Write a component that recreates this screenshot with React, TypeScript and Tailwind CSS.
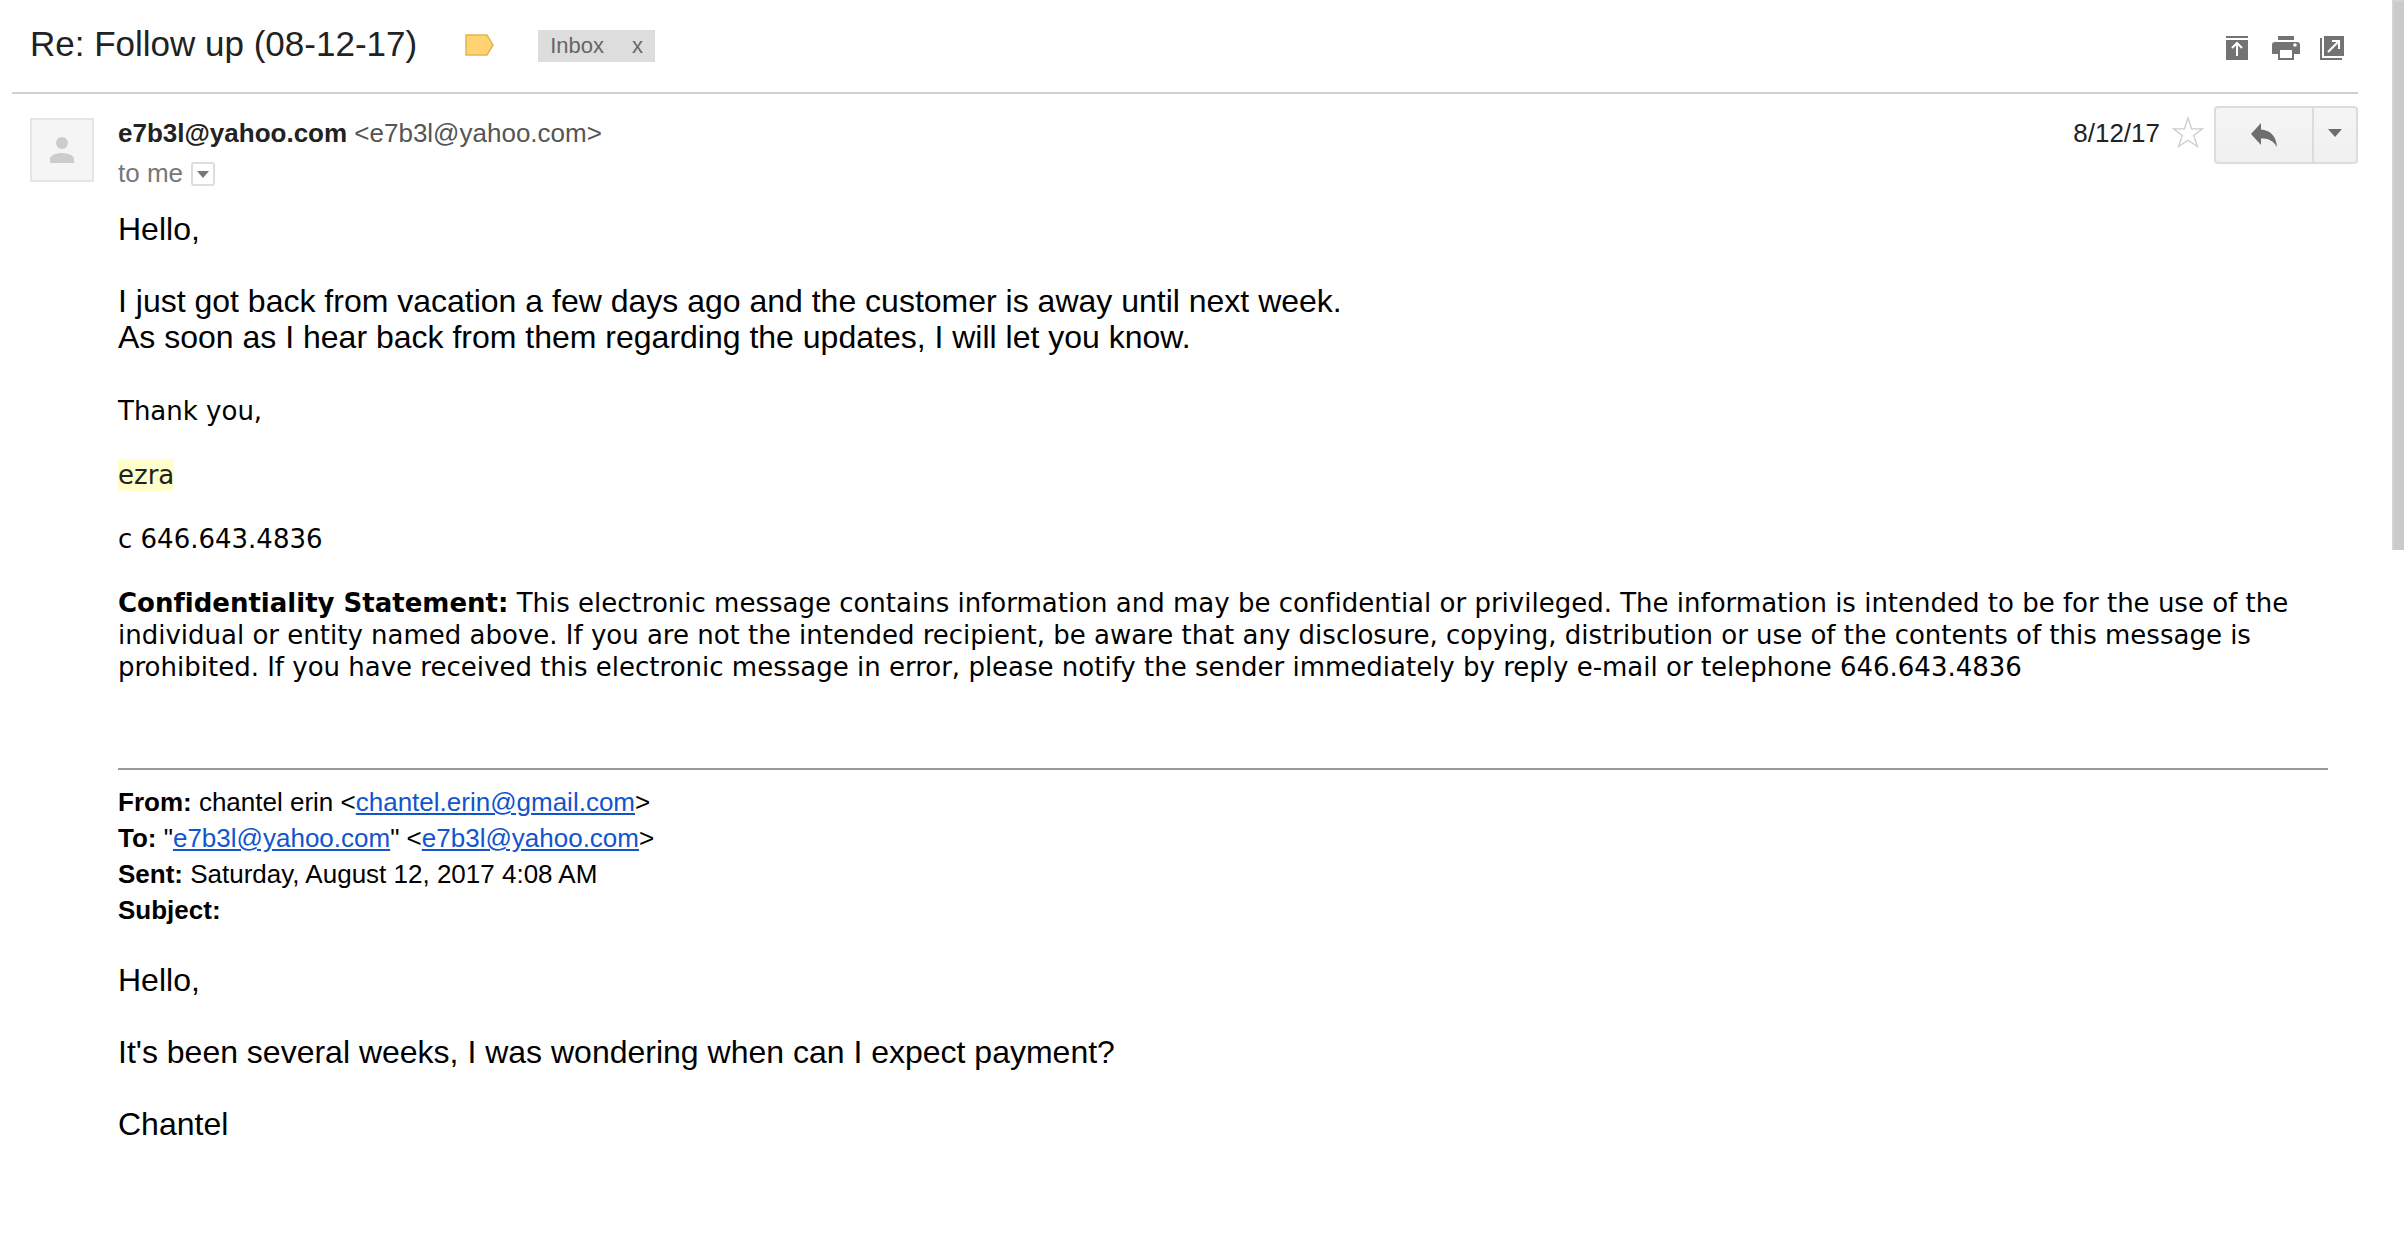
import React from "react";

function ArchiveIcon() {
  return (
    <svg width="22" height="24" viewBox="0 0 22 24" aria-hidden="true">
      <path fill="#737373" d="M0 0h22v2H0zM0 4h22v20H0z" />
      <path d="M11 20V8M6 12l5-5 5 5" stroke="#fff" strokeWidth="2" fill="none" />
    </svg>
  );
}

function PrintIcon() {
  return (
    <svg width="28" height="24" viewBox="0 0 28 24" aria-hidden="true">
      <path fill="#737373" d="M6 0h16v4H6zM3 6h22a3 3 0 0 1 3 3v9h-6v6H6v-6H0V9a3 3 0 0 1 3-3z" />
      <path fill="#fff" d="M8 14h12v8H8z" />
      <circle cx="23" cy="9" r="1.8" fill="#fff" />
    </svg>
  );
}

function PopOutIcon() {
  return (
    <svg width="24" height="24" viewBox="0 0 24 24" aria-hidden="true">
      <path fill="#737373" d="M4 0h20v20H4zM0 2h2v20h20v2H0z" />
      <path d="M8 16L19 5M12 5h7v8" stroke="#fff" strokeWidth="2" fill="none" />
    </svg>
  );
}

function Caret({ width, height, color }: { width: number; height: number; color: string }) {
  return (
    <svg width={width} height={height} viewBox="0 0 14 8" preserveAspectRatio="none" aria-hidden="true">
      <path d="M0 0h14L7 8z" fill={color} />
    </svg>
  );
}

function MailLink({ address }: { address: string }) {
  return (
    <a href={`mailto:${address}`} className="text-[#1155cc] underline">
      {address}
    </a>
  );
}

function SubjectBar() {
  return (
    <header className="ml-3 flex h-[94px] items-start border-b-2 border-[#cfcfcf] pl-[18px] pr-3.5">
      <h1 className="mt-6 text-[35px] leading-10 text-[#222]">Re: Follow up (08-12-17)</h1>
      <button type="button" aria-label="Importance marker" className="ml-12 mt-[34px]">
        <svg width="29" height="22" viewBox="0 0 29 22" aria-hidden="true">
          <path d="M1 1h21l6 10-6 10H1z" fill="#ffd272" stroke="#e3b552" strokeWidth="1.5" />
        </svg>
      </button>
      <div className="ml-11 mt-[30px] flex h-8 items-center bg-[#ddd] text-[22px] leading-8 text-[#666]">
        <span className="pl-3">Inbox</span>
        <button type="button" aria-label="Remove label Inbox" className="ml-4 px-3">
          x
        </button>
      </div>
      <div className="ml-auto mt-9 flex items-center">
        <button type="button" aria-label="Archive" className="mr-6"><ArchiveIcon /></button>
        <button type="button" aria-label="Print all" className="mr-5"><PrintIcon /></button>
        <button type="button" aria-label="In new window"><PopOutIcon /></button>
      </div>
    </header>
  );
}

function MessageHeader() {
  return (
    <div className="flex items-start pl-[30px] pt-3 text-[26px]">
      <div className="mt-3 flex size-16 shrink-0 items-center justify-center border-2 border-[#e5e5e5] bg-[#f5f5f5]">
        <svg width="24" height="26" viewBox="0 0 24 26" aria-hidden="true">
          <circle cx="12" cy="6" r="6" fill="#ccc" />
          <path d="M0 26v-4c0-4 7-6 12-6s12 2 12 6v4z" fill="#ccc" />
        </svg>
      </div>
      <div className="ml-6 mt-[7px]">
        <p className="leading-10 text-[#555]">
          <strong className="text-[#222]">e7b3l@yahoo.com</strong> &lt;e7b3l@yahoo.com&gt;
        </p>
        <p className="flex items-center leading-10 text-[#777]">
          to me
          <button
            type="button"
            aria-label="Show details"
            className="ml-2 mt-0.5 flex size-6 items-center justify-center rounded-[3px] border-2 border-[#ddd] bg-white"
          >
            <Caret width={12} height={7} color="#777" />
          </button>
        </p>
      </div>
      <div className="ml-auto flex">
        <time dateTime="2017-08-12" className="mt-[7px] leading-10 text-[#222]">8/12/17</time>
        <button type="button" aria-label="Not starred" className="ml-3 mr-2.5 mt-2.5 self-start">
          <svg width="32" height="32" viewBox="0 0 32 32" aria-hidden="true">
            <path
              d="M16 2l3.600 10.800H30.500l-8.900 6.700 3.900 11L16 24.200 6.500 30.500l3.900-11-8.900-6.700h10.900z"
              fill="#fff"
              stroke="#ccc"
              strokeWidth="1.300"
            />
          </svg>
        </button>
        <div className="flex h-[58px] divide-x-2 divide-[#dcdcdc] rounded-[4px] border-2 border-[#dcdcdc] bg-linear-to-b from-[#f5f5f5] to-[#f0f0f0]">
          <button type="button" aria-label="Reply" className="flex w-[98px] items-center justify-center">
            <svg width="26" height="24" viewBox="0 0 26 24" aria-hidden="true">
              <path d="M0 11L10 0v6.500C19 7.500 25 12 26 24 22 17 17 15.500 10 15.500V22z" fill="#6e6e6e" />
            </svg>
          </button>
          <button type="button" aria-label="More" className="flex w-[42px] items-center justify-center pb-1">
            <Caret width={14} height={8} color="#6e6e6e" />
          </button>
        </div>
      </div>
    </div>
  );
}

function MessageBody() {
  return (
    <article className="pb-10 pl-[118px] pr-[30px] pt-[18px] text-[32px] leading-9 text-black">
      <p>Hello,</p>
      <p className="mt-9">
        I just got back from vacation a few days ago and the customer is away until next week.
        <br />
        As soon as I hear back from them regarding the updates, I will let you know.
      </p>
      <div className="mt-10 space-y-8 font-['DejaVu_Sans',sans-serif] text-[26px] leading-8 [font-variant-ligatures:none]">
        <p>Thank you,</p>
        <p>
          <mark className="inline-block bg-[#ffffcc] text-[#222]">ezra</mark>
        </p>
        <p>c 646.643.4836</p>
        <p>
          <strong>Confidentiality Statement:</strong> This electronic message contains information and may be
          confidential or privileged. The information is intended to be for the use of the individual or entity
          named above. If you are not the intended recipient, be aware that any disclosure, copying, distribution
          or use of the contents of this message is prohibited. If you have received this electronic message in
          error, please notify the sender immediately by reply e-mail or telephone 646.643.4836
        </p>
      </div>
      <hr className="mt-[85px] border-t-2 border-[#999]" />
      <div className="mt-3.5 text-[26px]">
        <p>
          <strong>From:</strong> chantel erin &lt;<MailLink address="chantel.erin@gmail.com" />&gt;
        </p>
        <p>
          <strong>To:</strong> "<MailLink address="e7b3l@yahoo.com" />" &lt;<MailLink address="e7b3l@yahoo.com" />&gt;
        </p>
        <p>
          <strong>Sent:</strong> Saturday, August 12, 2017 4:08 AM
        </p>
        <p>
          <strong>Subject:</strong>
        </p>
      </div>
      <div className="mt-[34px] space-y-9">
        <p>Hello,</p>
        <p>It's been several weeks, I was wondering when can I expect payment?</p>
        <p>Chantel</p>
      </div>
    </article>
  );
}

export default function App() {
  return (
    <div className="flex min-h-screen bg-white font-['Liberation_Sans',Arial,sans-serif]">
      <main className="min-w-0 flex-1">
        <SubjectBar />
        <MessageHeader />
        <MessageBody />
      </main>
      <div className="ml-[34px] w-3 shrink-0" aria-hidden="true">
        <div className="h-[550px] border-l-2 border-t-2 border-[#d4d4d4] bg-[#cbcbcb]" />
      </div>
    </div>
  );
}
